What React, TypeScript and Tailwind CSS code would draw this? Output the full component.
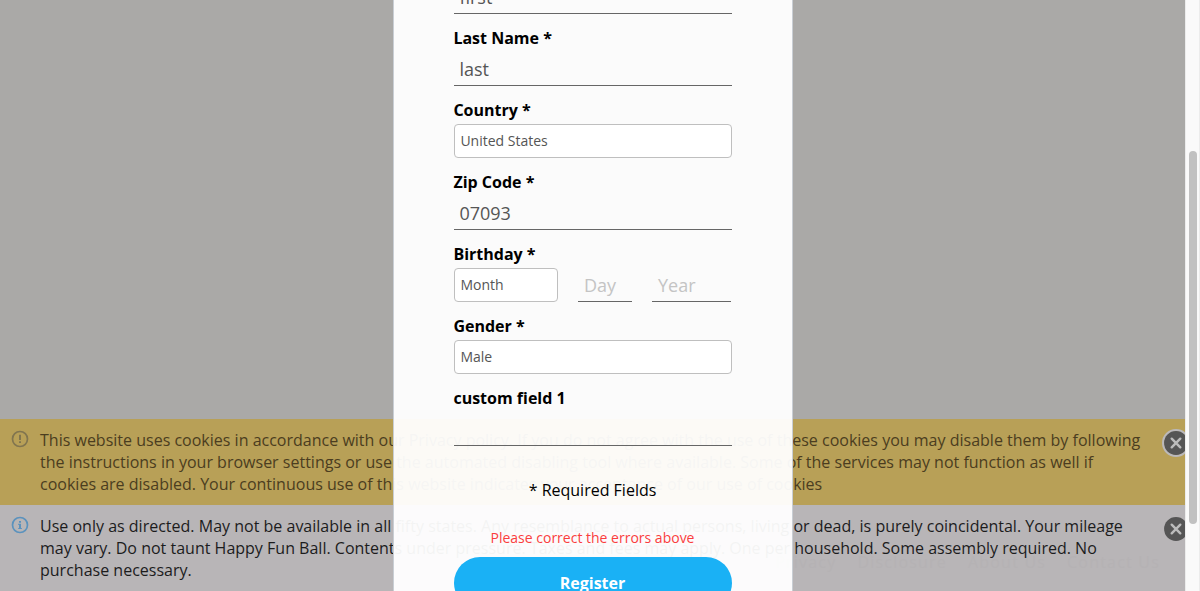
import type { ReactNode } from "react";

const FONT = "font-['Open_Sans','Noto_Sans',sans-serif]";

function Field({ label, children }: { label: string; children: ReactNode }) {
  return (
    <div className="mb-[13px] flex flex-col gap-[3px]">
      <div className="-ml-[0.6px] h-[22px] text-base leading-[22px] font-bold whitespace-nowrap text-black">{label}</div>
      {children}
    </div>
  );
}

function Line({ value, placeholder, width = "w-full" }: { value?: string; placeholder?: string; width?: string }) {
  return (
    <div className={`h-[34px] border-b border-[#666] text-lg leading-[35px] ${width} ${value ? "pl-[5.4px] text-[#555]" : "pl-1.5 text-[#c4c4c4]"}`}>
      {value ?? placeholder}
    </div>
  );
}

function Select({ value, width = "w-full" }: { value: string; width?: string }) {
  return (
    <div className={`h-[34px] rounded-[4px] border border-[#bfbfbf] bg-white pl-[5.4px] text-sm leading-8 text-[#555] ${width}`}>
      {value}
    </div>
  );
}

function NoticeIcon({ kind }: { kind: "warn" | "info" }) {
  return (
    <svg className="h-[18px] w-[18px] shrink-0" viewBox="0 0 18 18" fill="none">
      <circle cx="9" cy="9" r="7.5" stroke="currentColor" strokeWidth="1.7" />
      {kind === "warn" ? (
        <path d="M8 4.8h2v5.2H8zM8 11.2h2V13H8z" fill="currentColor" />
      ) : (
        <path d="M8 4.9h2v1.8H8zM7.2 7.7H10v4.2h.9V13H7.2v-1.1H8v-3h-.8z" fill="currentColor" />
      )}
    </svg>
  );
}

function Close({ focused }: { focused?: boolean }) {
  return (
    <svg className="absolute top-[10px] left-[1162px] h-7 w-7" viewBox="0 0 28 28" fill="none">
      {focused && <circle cx="14" cy="14" r="12.8" stroke="#bbb9bb" strokeWidth="2.4" />}
      <circle cx="14" cy="14" r="11.9" fill="#555" />
      <path d="M9.7 9.7l8.6 8.6M18.3 9.7l-8.6 8.6" stroke="#bcbcbc" strokeWidth="2.4" strokeLinecap="round" />
    </svg>
  );
}

const cookieLines = [
  "This website uses cookies in accordance with our Privacy policy. If you do not agree with the use of these cookies you may disable them by following",
  "the instructions in your browser settings or use the automated disabling tool where available. Some of the services may not function as well if",
  "cookies are disabled. Your continuous use of this website indicates your acceptance of our use of cookies",
];

const legalLines = [
  "Use only as directed. May not be available in all fifty states. Any resemblance to actual persons, living or dead, is purely coincidental. Your mileage",
  "may vary. Do not taunt Happy Fun Ball. Contents under pressure. Taxes and fees may apply. One per household. Some assembly required. No",
  "purchase necessary.",
];

function NoticeText({ lines }: { lines: string[] }) {
  return (
    <div className="text-base leading-[22px] tracking-[0.006px] whitespace-nowrap">
      {lines.map((line) => (
        <div key={line}>{line}</div>
      ))}
    </div>
  );
}

export default function App() {
  return (
    <div className={`relative flex h-[591px] w-[1200px] overflow-hidden ${FONT}`}>
      <main className="relative flex h-full w-[1185px] shrink-0 flex-col justify-end overflow-hidden bg-[#aaa9a7]">
        <section className="relative flex h-[86px] gap-[11px] bg-[#b8a057] pt-[10px] pl-[11px] text-[#4b3d20]">
          <span className="pt-px text-[#81754f]"><NoticeIcon kind="warn" /></span>
          <NoticeText lines={cookieLines} />
          <Close focused />
        </section>
        <section className="relative flex h-[86px] gap-[11px] bg-[#b8b5b7] pt-[10px] pl-[11px] text-[#1c1c1d]">
          <nav className="absolute top-[46px] right-[25px] flex gap-[21px] text-base leading-[22px] tracking-[1.2px] whitespace-nowrap text-[#b5b2b4]">
            <span>Privacy</span>
            <span>Disclosure</span>
            <span>About Us</span>
            <span>Contact Us</span>
          </nav>
          <span className="relative pt-px text-[#5b92bd]"><NoticeIcon kind="info" /></span>
          <div className="relative"><NoticeText lines={legalLines} /></div>
          <Close />
        </section>
      </main>

      <aside className="flex h-full w-[15px] flex-col border-x border-[#ececec] bg-[#fafafa] pt-[151px] pl-[3px]">
        <div className="h-[373px] w-2 rounded-full bg-[#c1c1c1]" />
      </aside>

      <div className="absolute top-[-100px] left-[393px] flex h-[760px] w-[400px] flex-col border border-[#c9ced4] bg-white/95 px-[60px] pt-[54px]">
        <Field label="First Name *"><Line value="first" /></Field>
        <Field label="Last Name *"><Line value="last" /></Field>
        <Field label="Country *"><Select value="United States" /></Field>
        <Field label="Zip Code *"><Line value="07093" /></Field>
        <Field label="Birthday *">
          <div className="flex gap-5">
            <Select value="Month" width="w-[104px]" />
            <Line placeholder="Day" width="w-[54px]" />
            <Line placeholder="Year" width="w-[79px]" />
          </div>
        </Field>
        <Field label="Gender *"><Select value="Male" /></Field>
        <Field label="custom field 1"><Line /></Field>
        <div className="mt-5 pr-px text-center text-base leading-[22px] text-black">* Required Fields</div>
        <div className="mt-[27px] pr-px text-center text-sm leading-5 text-[#fa3e3e]">Please correct the errors above</div>
        <button className="mt-[9px] h-[52px] shrink-0 rounded-full bg-[#1ab1f5] pr-px text-base font-bold text-white">Register</button>
      </div>
    </div>
  );
}
